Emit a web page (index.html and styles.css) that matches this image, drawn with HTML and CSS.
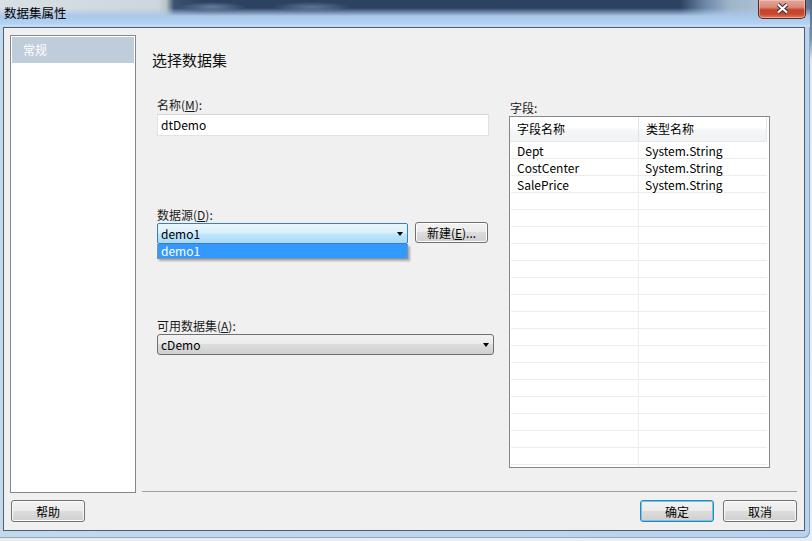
FILE: index.html
```html
<!DOCTYPE html>
<html lang="zh-CN">
<head>
<meta charset="utf-8">
<title>数据集属性</title>
<link rel="stylesheet" href="styles.css">
</head>
<body>
<div class="window">
  <div class="titlebar">
    <span class="title">数据集属性</span>
    <button class="close" aria-label="关闭">
      <svg width="13" height="11" viewBox="0 0 13 11">
        <path d="M2 1.5 L11 9.5 M11 1.5 L2 9.5" stroke="#40302e" stroke-width="4.2" fill="none"/>
        <path d="M2 1.5 L11 9.5 M11 1.5 L2 9.5" stroke="#ffffff" stroke-width="2.2" fill="none"/>
      </svg>
    </button>
  </div>
  <div class="client">
    <div class="body-row">
      <nav class="nav"><div class="nav-item is-selected">常规</div></nav>
      <div class="main">
        <div class="page">
          <h1 class="heading">选择数据集</h1>
          <div class="cols">
            <div class="form">
              <div class="lbl">名称(<u>M</u>):</div>
              <div class="textbox">dtDemo</div>
              <div class="lbl lbl-ds">数据源(<u>D</u>):</div>
              <div class="combo-row">
                <div class="combo-wrap">
                  <div class="combo is-focused"><span>demo1</span><i class="arrow"></i></div>
                  <div class="dropdown"><div class="opt">demo1</div></div>
                </div>
                <button class="btn btn-new">新建(<u>E</u>)...</button>
              </div>
              <div class="lbl lbl-av">可用数据集(<u>A</u>):</div>
              <div class="combo combo-wide"><span>cDemo</span><i class="arrow"></i></div>
            </div>
            <div class="fields">
              <div class="lbl lbl-fields">字段:</div>
              <div class="grid">
                <div class="grid-head"><div class="gc">字段名称</div><div class="gc">类型名称</div></div>
                <div class="grid-body">
                  <div class="gr"><div class="gc">Dept</div><div class="gc">System.String</div></div>
                  <div class="gr"><div class="gc">CostCenter</div><div class="gc">System.String</div></div>
                  <div class="gr"><div class="gc">SalePrice</div><div class="gc">System.String</div></div>
                  <div class="gr"><div class="gc"></div><div class="gc"></div></div>
                  <div class="gr"><div class="gc"></div><div class="gc"></div></div>
                  <div class="gr"><div class="gc"></div><div class="gc"></div></div>
                  <div class="gr"><div class="gc"></div><div class="gc"></div></div>
                  <div class="gr"><div class="gc"></div><div class="gc"></div></div>
                  <div class="gr"><div class="gc"></div><div class="gc"></div></div>
                  <div class="gr"><div class="gc"></div><div class="gc"></div></div>
                  <div class="gr"><div class="gc"></div><div class="gc"></div></div>
                  <div class="gr"><div class="gc"></div><div class="gc"></div></div>
                  <div class="gr"><div class="gc"></div><div class="gc"></div></div>
                  <div class="gr"><div class="gc"></div><div class="gc"></div></div>
                  <div class="gr"><div class="gc"></div><div class="gc"></div></div>
                  <div class="gr"><div class="gc"></div><div class="gc"></div></div>
                  <div class="gr"><div class="gc"></div><div class="gc"></div></div>
                  <div class="gr"><div class="gc"></div><div class="gc"></div></div>
                  <div class="gr"><div class="gc"></div><div class="gc"></div></div>
                  <div class="gr"><div class="gc"></div><div class="gc"></div></div>
                </div>
              </div>
            </div>
          </div>
        </div>
        <div class="sep"></div>
      </div>
    </div>
    <div class="btn-row">
      <button class="btn btn-dlg">帮助</button>
      <div class="spacer"></div>
      <button class="btn btn-dlg is-default">确定</button>
      <button class="btn btn-dlg">取消</button>
    </div>
  </div>
</div>
</body>
</html>
```

FILE: styles.css
```css
* { box-sizing: border-box; }
html, body { margin: 0; padding: 0; }
body {
  width: 812px;
  height: 541px;
  overflow: hidden;
  background: linear-gradient(180deg, #4e6580 0, #7d93ab 40px, #dfe6ee 60px, #e9edf2 100%);
  font-family: "Noto Sans CJK SC", "Noto Sans", sans-serif;
  font-size: 12px;
  color: #000;
}
.window {
  width: 810px;
  height: 538px;
  display: flex;
  flex-direction: column;
  padding: 0 5px 7px 3px;
  background: linear-gradient(90deg, #c4d8ec 0, #b9d3ee 100%);
  border-radius: 0 0 6px 0;
  box-shadow: inset -1px -1px 0 #8ea9c6;
}
.titlebar {
  height: 27px;
  margin: 0 -5px 0 -3px;
  display: flex;
  align-items: flex-start;
  background:
    radial-gradient(ellipse 34px 5px at 212px 7px, rgba(120,145,180,.75), rgba(120,145,180,0)),
    radial-gradient(ellipse 40px 5px at 312px 7px, rgba(120,145,180,.65), rgba(120,145,180,0)),
    linear-gradient(180deg, rgba(176,206,238,0) 8px, #a9c8ea 16px, #b4d2f2 24px, #c9e0f6 26px, #b8d3ef 27px),
    linear-gradient(90deg, #d8e0e6 0, #cdd6dd 158px, #b8c6c6 166px, #3b5272 174px, #2d4262 200px, #2d4262 680px, #6c88a8 705px, #9fb5cb 730px, #aabfd3 758px, #5c7390 810px);
}
.title {
  padding: 5px 0 0 4px;
  line-height: 16px;
  font-size: 12.5px;
  color: #000;
  flex: 1;
}
.close {
  width: 48px;
  height: 19px;
  margin-right: 4px;
  padding: 0;
  border: 1px solid #5a2a24;
  border-top: none;
  border-radius: 0 0 5px 5px;
  background: linear-gradient(180deg, #e4a699 0, #d98a7c 40%, #c6412b 55%, #c94a30 80%, #e08060 100%);
  box-shadow: inset 0 0 0 1px rgba(255,220,210,.45);
  display: flex;
  align-items: center;
  justify-content: center;
}
.close svg { display: block; margin-top: -1px; }
.client {
  flex: 1;
  display: flex;
  flex-direction: column;
  background: #f0f0f0;
  border: 1px solid #4d5d72;
}
.body-row {
  display: flex;
  padding: 7px 7px 0 6px;
  height: 465px;
}
.nav {
  width: 126px;
  height: 458px;
  background: #fff;
  border: 1px solid #828790;
  padding: 1px;
}
.nav-item {
  height: 26px;
  line-height: 26px;
  padding-left: 11px;
  color: #fff;
  font-size: 12px;
}
.nav-item.is-selected { background: #bfcddb; }
.main {
  flex: 1;
  margin-left: 6px;
  height: 458px;
  display: flex;
  flex-direction: column;
}
.page { flex: 1; }
.sep {
  height: 1px;
  margin-bottom: 1px;
  background: #a0a0a0;
}
.heading {
  margin: 0;
  padding: 14px 0 0 10px;
  font-size: 15px;
  font-weight: normal;
  line-height: 22px;
  color: #111;
}
.cols {
  display: flex;
  padding-left: 15px;
  margin-top: 26px;
}
.form {
  width: 336px;
  display: flex;
  flex-direction: column;
  align-items: flex-start;
}
.lbl {
  line-height: 16px;
  height: 16px;
  color: #1a1a1a;
}
.lbl u { text-underline-offset: 1px; }
.textbox {
  width: 332px;
  height: 22px;
  margin-top: 1px;
  background: #fff;
  border: 1px solid #dfe3e8;
  border-top-color: #d2d6dc;
  padding: 0 0 0 3px;
  line-height: 20px;
}
.lbl-ds { margin-top: 71px; }
.combo-row {
  display: flex;
  align-items: flex-start;
  gap: 7px;
}
.combo-wrap { position: relative; }
.combo {
  height: 21px;
  display: flex;
  align-items: center;
  justify-content: space-between;
  padding: 0 4px 0 3px;
  border: 1px solid #707070;
  border-radius: 3px;
  background: linear-gradient(180deg, #f2f2f2 0, #ebebeb 50%, #dddddd 50%, #cfcfcf 100%);
  line-height: 19px;
}
.combo.is-focused {
  width: 251px;
  border-color: #3c7fb1;
  border-radius: 2px;
  background: linear-gradient(180deg, #eaf6fd 0, #d9f0fc 45%, #bee6fd 55%, #a7d9f5 100%);
}
.combo-wide { width: 337px; }
.arrow {
  width: 0;
  height: 0;
  border-left: 3.5px solid transparent;
  border-right: 3.5px solid transparent;
  border-top: 4px solid #000;
  margin-top: 1px;
}
.dropdown {
  position: absolute;
  left: 0;
  top: 21px;
  width: 251px;
  height: 15px;
  border: 1px solid #8093aa;
  border-top: none;
  background: #fff;
  box-shadow: 2px 2px 2px rgba(0,0,0,.3);
}
.opt {
  height: 14px;
  line-height: 14px;
  padding-left: 3px;
  background: #3399ff;
  color: #fff;
}
.btn {
  font-family: inherit;
  font-size: 12px;
  color: #000;
  padding: 0;
  border: 1px solid #707070;
  border-radius: 3px;
  background: linear-gradient(180deg, #f2f2f2 0, #ebebeb 50%, #dddddd 50%, #cfcfcf 100%);
  box-shadow: inset 0 0 0 1px #fcfcfc;
  line-height: 19px;
}
.btn-new {
  width: 73px;
  height: 21px;
  margin-top: -1px;
}
.lbl-av { margin-top: 74px; }
.fields {
  margin-left: 16px;
  display: flex;
  flex-direction: column;
}
.lbl-fields { margin-top: 3px; padding-left: 1px; }
.grid {
  width: 261px;
  height: 352px;
  border: 1px solid #828790;
  background: #fff;
  overflow: hidden;
}
.grid-head {
  display: flex;
  height: 25px;
  border-bottom: 1px solid #e8e8e8;
  background: linear-gradient(180deg, #ffffff 0, #ffffff 45%, #f5f6f7 55%, #f1f2f3 100%);
  width: 257px;
}
.grid-head .gc {
  line-height: 24px;
  padding-left: 7px;
}
.grid-head .gc:first-child { width: 129px; border-right: 1px solid #e3e3e3; }
.grid-head .gc:last-child { width: 128px; border-right: 1px solid #e8e8e8; }
.grid-body { padding-left: 1px; }
.gr {
  display: flex;
  height: 17px;
  width: 256px;
  border-bottom: 1px solid #ececec;
}
.gr .gc {
  line-height: 17px;
  padding-left: 6px;
}
.gr .gc:first-child { width: 128px; border-right: 1px solid #ececec; }
.gr .gc:last-child { width: 128px; }
.btn-row {
  display: flex;
  padding: 7px 7px 0 7px;
  gap: 9px;
}
.spacer { flex: 1; }
.btn-dlg {
  width: 74px;
  height: 22px;
}
.btn-dlg.is-default {
  border-color: #3c7fb1;
  box-shadow: inset 0 0 0 1px #5fcdf5;
}
```
